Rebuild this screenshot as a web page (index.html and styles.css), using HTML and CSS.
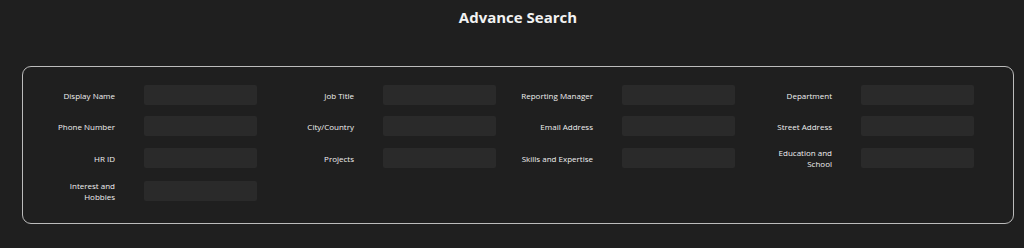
FILE: index.html
```html
<!DOCTYPE html>
<html lang="en">
<head>
	<meta charset="UTF-8">
	<title>Advance Search</title>
	<link rel="stylesheet" href="styles.css">
</head>
<body>
	<h1 class="title">Advance Search</h1>
	<form class="search-card">
		<div class="field"><label for="displayName">Display Name</label><input type="text" id="displayName"></div>
		<div class="field"><label for="jobTitle">Job Title</label><input type="text" id="jobTitle"></div>
		<div class="field"><label for="manager">Reporting Manager</label><input type="text" id="manager"></div>
		<div class="field"><label for="department">Department</label><input type="text" id="department"></div>

		<div class="field"><label for="phone">Phone Number</label><input type="text" id="phone"></div>
		<div class="field"><label for="city">City/Country</label><input type="text" id="city"></div>
		<div class="field"><label for="email">Email Address</label><input type="text" id="email"></div>
		<div class="field"><label for="street">Street Address</label><input type="text" id="street"></div>

		<div class="field"><label for="hrid">HR ID</label><input type="text" id="hrid"></div>
		<div class="field"><label for="projects">Projects</label><input type="text" id="projects"></div>
		<div class="field"><label for="skills">Skills and Expertise</label><input type="text" id="skills"></div>
		<div class="field"><label for="education">Education and School</label><input type="text" id="education"></div>

		<div class="field"><label for="interest">Interest and Hobbies</label><input type="text" id="interest"></div>
	</form>
</body>
</html>
```

FILE: styles.css
```css
html {
	height: 100%;
	background-color: #1f1f1f;
}
body {
	margin: 0;
	padding: 0 10px 0 22px;
	font-family: "Open Sans", "Noto Sans", sans-serif;
	color: #e8e8e8;
}
.title {
	margin: 0;
	padding-top: 6px;
	height: 60px;
	text-align: center;
	font-size: 15px;
	font-weight: 700;
	line-height: 22px;
	color: #f2f2f2;
}
.search-card {
	display: grid;
	grid-template-columns: repeat(4, 216px);
	column-gap: 23px;
	row-gap: 11px;
	align-items: center;
	padding: 18px 18px 21px 18px;
	border: 1px solid #bcbcbc;
	border-radius: 9px;
}
.field {
	display: flex;
	align-items: center;
	gap: 29px;
}
.field label {
	width: 74px;
	flex: none;
	text-align: right;
	font-size: 8px;
	line-height: 11px;
	color: #f0f0f0;
}
.field input {
	width: 113px;
	height: 20px;
	margin: 0;
	padding: 0 6px;
	box-sizing: border-box;
	border: 0;
	border-radius: 2px;
	background-color: #2a2a2a;
	color: #e6e6e6;
	font-family: inherit;
	font-size: 9px;
}
```
